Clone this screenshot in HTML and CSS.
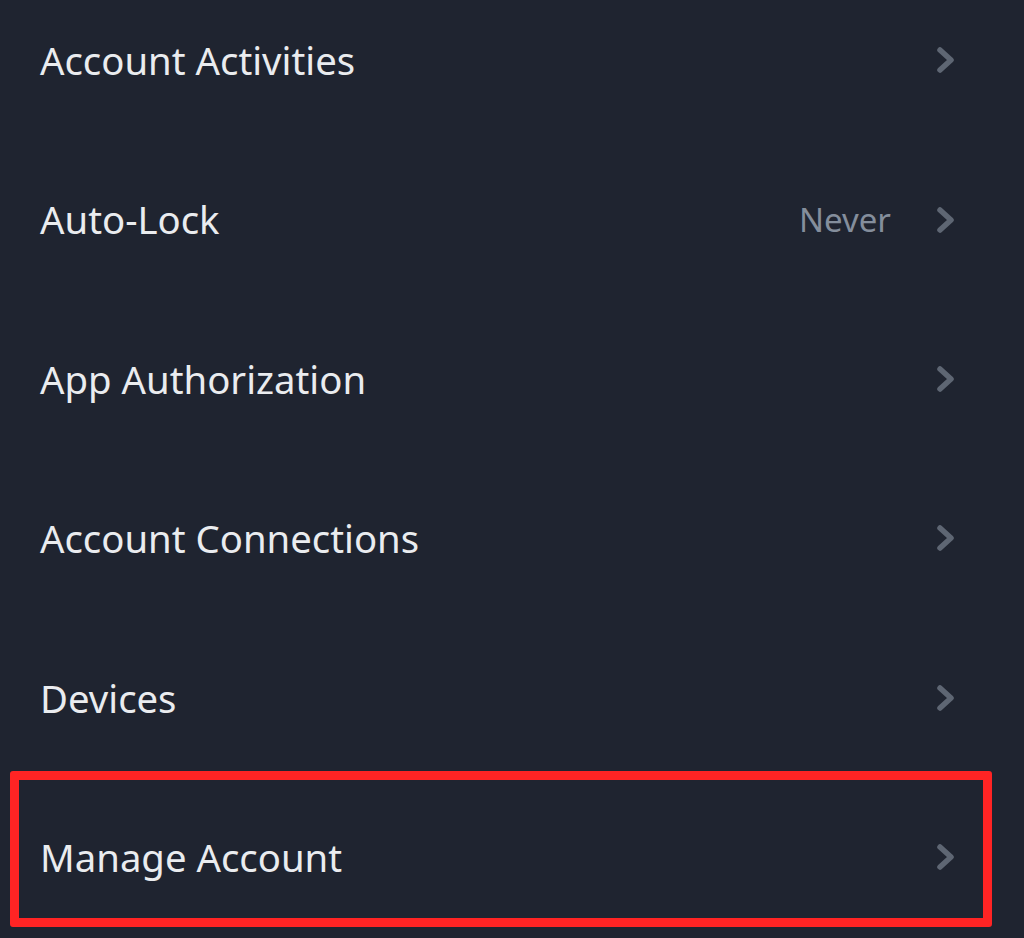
FILE: index.html
```html
<!DOCTYPE html>
<html lang="en">
<head>
<meta charset="utf-8">
<title>Security</title>
<link rel="stylesheet" href="styles.css">
</head>
<body>
<main class="page">
  <ul class="menu">
    <li class="row"><span class="label">Account Activities</span><span class="right"><svg class="chev" viewBox="0 0 20 28"><path d="M4 4 L15 14 L4 24"/></svg></span></li>
    <li class="row"><span class="label">Auto-Lock</span><span class="right"><span class="value">Never</span><svg class="chev" viewBox="0 0 20 28"><path d="M4 4 L15 14 L4 24"/></svg></span></li>
    <li class="row"><span class="label">App Authorization</span><span class="right"><svg class="chev" viewBox="0 0 20 28"><path d="M4 4 L15 14 L4 24"/></svg></span></li>
    <li class="row"><span class="label">Account Connections</span><span class="right"><svg class="chev" viewBox="0 0 20 28"><path d="M4 4 L15 14 L4 24"/></svg></span></li>
    <li class="row"><span class="label">Devices</span><span class="right"><svg class="chev" viewBox="0 0 20 28"><path d="M4 4 L15 14 L4 24"/></svg></span></li>
    <li class="row"><span class="label">Manage Account</span><span class="right"><svg class="chev" viewBox="0 0 20 28"><path d="M4 4 L15 14 L4 24"/></svg></span></li>
  </ul>
  <div class="highlight"></div>
</main>
</body>
</html>
```

FILE: styles.css
```css
html, body {
  margin: 0;
  padding: 0;
  background: #1f2430;
}
body {
  width: 1024px;
  height: 938px;
  overflow: hidden;
  font-family: "Noto Sans", "Open Sans", Arial, sans-serif;
}
.page {
  position: relative;
  display: flow-root;
  width: 1024px;
  height: 938px;
}
.menu {
  list-style: none;
  margin: -19.5px 0 0 0;
  padding: 0;
}
.row {
  height: 159.4px;
  display: flex;
  align-items: center;
  justify-content: space-between;
  padding: 0 68px 0 40px;
  box-sizing: border-box;
}
.label {
  color: #eaecef;
  font-size: 38.3px;
  line-height: 1;
}
.right {
  display: flex;
  align-items: center;
  gap: 45px;
}
.value {
  color: #848e9c;
  font-size: 33px;
  line-height: 1;
}
.chev {
  width: 20px;
  height: 28px;
  display: block;
}
.chev path {
  fill: none;
  stroke: #5e6673;
  stroke-width: 5.5;
  stroke-linecap: round;
  stroke-linejoin: round;
}
.highlight {
  position: absolute;
  left: 10px;
  top: 771px;
  width: 982px;
  height: 156px;
  box-sizing: border-box;
  border: 9px solid #ff2424;
  border-radius: 3px;
}
```
